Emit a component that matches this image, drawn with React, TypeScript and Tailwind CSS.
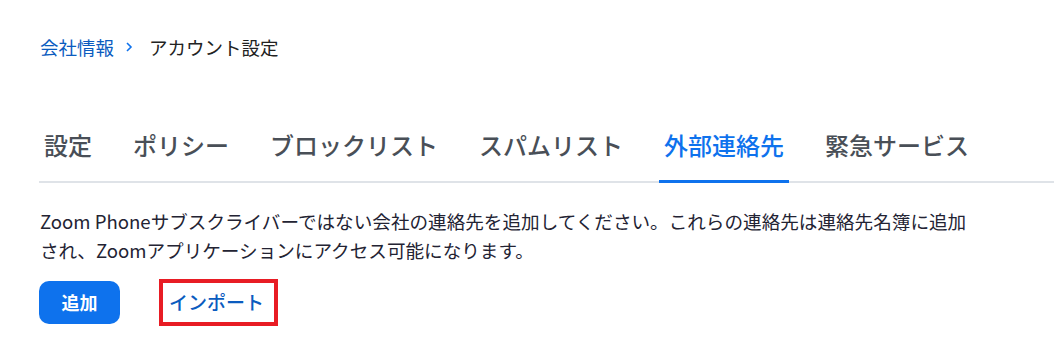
import React from 'react';

const tabs = ['設定', 'ポリシー', 'ブロックリスト', 'スパムリスト', '外部連絡先', '緊急サービス'];

export default function App() {
  const active = '外部連絡先';
  return (
    <div className="min-h-[355px] bg-white font-['Noto_Sans_CJK_JP',_'Noto_Sans',_sans-serif]">
      {/* breadcrumb */}
      <div className="flex items-center pl-[40px] pt-[35px] text-[18.5px] leading-6">
        <span className="text-[#0b5cbf]">会社情報</span>
        <svg className="ml-[9px] mr-[14px] h-[12px] w-[12px]" viewBox="0 0 12 12" fill="none">
          <path d="M4 2l4 4-4 4" stroke="#0e72ed" strokeWidth="1.6" />
        </svg>
        <span className="text-[#222]">アカウント設定</span>
      </div>

      {/* tabs */}
      <div className="mt-[70px] ml-[39px] flex items-end gap-[31px] border-b-2 border-[#dfe3e8]">
        {tabs.map((t) => (
          <div
            key={t}
            className={
              t === active
                ? 'px-[5px] pb-[19px] text-[24px] leading-8 font-medium text-[#0e72ed] border-b-[3px] border-[#0e72ed] -mb-[2px]'
                : 'px-[5px] pb-[19px] text-[24px] leading-8 font-medium text-[#494f57] border-b-[3px] border-transparent -mb-[2px]'
            }
          >
            {t}
          </div>
        ))}
      </div>

      {/* description */}
      <p className="mt-[23px] ml-[40px] w-[940px] text-[18.6px] leading-[29px] text-[#232333]">
        Zoom Phoneサブスクライバーではない会社の連絡先を追加してください。これらの連絡先は連絡先名簿に追加され、Zoomアプリケーションにアクセス可能になります。
      </p>

      {/* actions */}
      <div className="mt-[15px] ml-[39px] flex items-center gap-[39px]">
        <button className="h-[43px] w-[81px] rounded-[10px] bg-[#0e72ed] text-[18px] font-bold text-white">
          追加
        </button>
        <div className="flex h-[47px] w-[119px] items-center border-4 border-[#e81c24] pl-[6px]">
          <span className="text-[19px] font-medium text-[#0b5cbf]">インポート</span>
        </div>
      </div>
    </div>
  );
}
